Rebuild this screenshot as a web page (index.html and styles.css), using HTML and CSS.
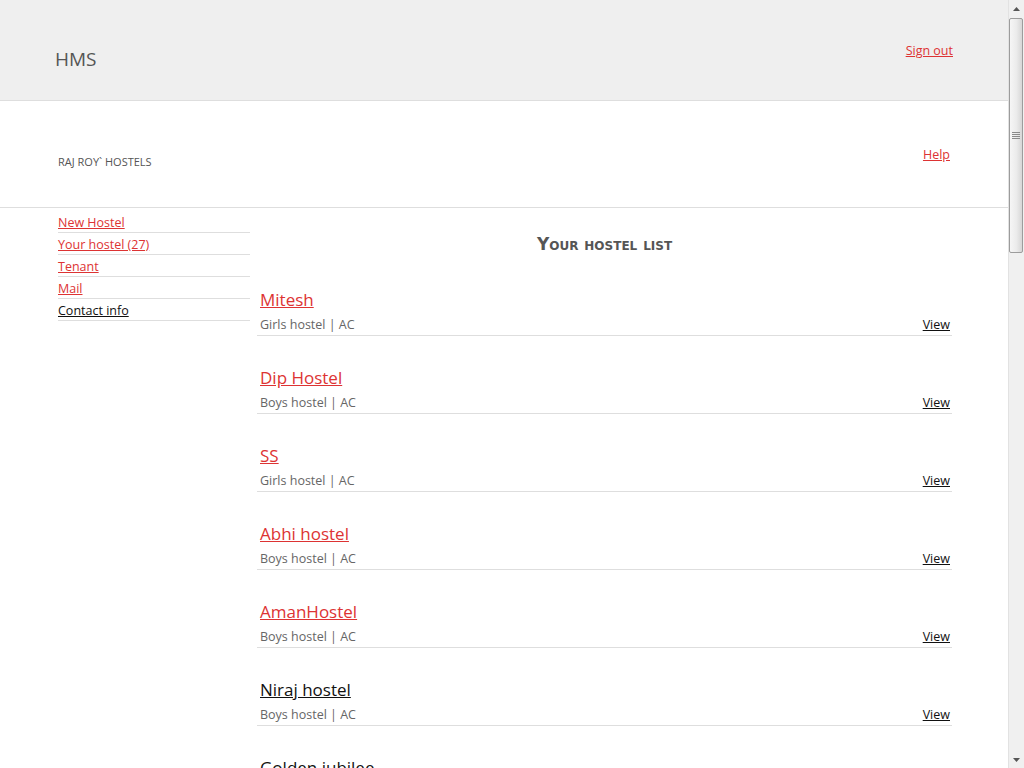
FILE: index.html
```html
<!DOCTYPE html>
<html lang="en">
<head>
<meta charset="utf-8">
<title>HMS</title>
<link rel="stylesheet" href="styles.css">
</head>
<body>
<div class="page">
<header class="topbar">
  <div class="brand">HMS</div>
  <a class="signout" href="#">Sign out</a>
</header>
<div class="subbar">
  <div class="owner">Raj Roy` hostels</div>
  <a class="help" href="#">Help</a>
</div>
<div class="content">
  <nav class="sidebar">
    <a class="side-item" href="#">New Hostel</a>
    <a class="side-item" href="#">Your hostel (27)</a>
    <a class="side-item" href="#">Tenant</a>
    <a class="side-item" href="#">Mail</a>
    <a class="side-item dark" href="#">Contact info</a>
  </nav>
  <main class="main">
    <h1 class="list-title">Your hostel list</h1>
    <div class="entry"><a class="name" href="#">Mitesh</a><div class="meta"><span>Girls hostel | AC</span><a class="view" href="#">View</a></div></div>
    <div class="entry"><a class="name" href="#">Dip Hostel</a><div class="meta"><span>Boys hostel | AC</span><a class="view" href="#">View</a></div></div>
    <div class="entry"><a class="name" href="#">SS</a><div class="meta"><span>Girls hostel | AC</span><a class="view" href="#">View</a></div></div>
    <div class="entry"><a class="name" href="#">Abhi hostel</a><div class="meta"><span>Boys hostel | AC</span><a class="view" href="#">View</a></div></div>
    <div class="entry"><a class="name" href="#">AmanHostel</a><div class="meta"><span>Boys hostel | AC</span><a class="view" href="#">View</a></div></div>
    <div class="entry"><a class="name dark" href="#">Niraj hostel</a><div class="meta"><span>Boys hostel | AC</span><a class="view" href="#">View</a></div></div>
    <div class="entry"><a class="name dark" href="#">Golden jubilee</a><div class="meta"><span>Boys hostel | AC</span><a class="view" href="#">View</a></div></div>
  </main>
</div>
</div>
<div class="scrollbar" aria-hidden="true">
  <div class="sb-btn">
    <svg width="7" height="4" viewBox="0 0 7 4"><path d="M0 4 L3.5 0 L7 4 Z" fill="#555"/></svg>
  </div>
  <div class="sb-track">
    <div class="sb-thumb">
      <svg width="8" height="7" viewBox="0 0 8 7"><path d="M0 0.5H8M0 2.5H8M0 4.5H8M0 6.5H8" stroke="#8a8a8a" stroke-width="1"/></svg>
    </div>
  </div>
  <div class="sb-btn">
    <svg width="7" height="4" viewBox="0 0 7 4"><path d="M0 0 L7 0 L3.5 4 Z" fill="#555"/></svg>
  </div>
</div>
</body>
</html>
```

FILE: styles.css
```css
html, body {
  margin: 0;
  padding: 0;
}
body {
  font-family: "Open Sans", "Noto Sans", "Liberation Sans", sans-serif;
  font-size: 12px;
  color: #555;
  background: #fff;
  display: flex;
  height: 100vh;
  overflow: hidden;
}
a {
  color: #dd3333;
}
a.dark {
  color: #111;
}
.page {
  width: 1008px;
  flex: none;
  overflow: hidden;
}

/* fake window scrollbar */
.scrollbar {
  width: 16px;
  flex: none;
  display: flex;
  flex-direction: column;
  background: #f0f0f0;
  box-sizing: border-box;
  border-left: 1px solid #e2e2e2;
}
.sb-btn {
  height: 17px;
  display: flex;
  align-items: center;
  justify-content: center;
}
.sb-track {
  flex: 1;
  padding-top: 1px;
}
.sb-thumb {
  height: 235px;
  box-sizing: border-box;
  margin: 0 1px 0 0;
  border: 1px solid #9c9c9c;
  border-radius: 2px;
  background: linear-gradient(to right, #f6f6f6, #ebebeb 55%, #d6d6d6);
  display: flex;
  align-items: center;
  justify-content: center;
}

/* top bar */
.topbar {
  height: 101px;
  box-sizing: border-box;
  background: #efefef;
  border-bottom: 1px solid #dedede;
  display: flex;
  justify-content: space-between;
  align-items: flex-start;
  padding: 0 55px;
}
.brand {
  font-size: 19px;
  color: #555;
  margin-top: 46px;
  line-height: 26px;
}
.signout {
  font-size: 12.5px;
  margin-top: 42px;
  line-height: 18px;
}

/* sub bar */
.subbar {
  height: 107px;
  box-sizing: border-box;
  border-bottom: 1px solid #dedede;
  display: flex;
  justify-content: space-between;
  align-items: flex-start;
  padding: 0 58px;
}
.owner {
  text-transform: uppercase;
  font-size: 11px;
  margin-top: 53px;
  line-height: 16px;
  color: #555;
}
.help {
  font-size: 12.5px;
  margin-top: 45px;
  line-height: 18px;
}

/* content */
.content {
  display: flex;
  align-items: flex-start;
  padding-left: 58px;
}
.sidebar {
  width: 192px;
  display: flex;
  flex-direction: column;
  padding-top: 3px;
}
.side-item {
  font-size: 12.5px;
  padding-top: 3px;
  line-height: 18px;
  border-bottom: 1px solid #dedede;
}
.main {
  margin-left: 7px;
  width: 695px;
  padding-top: 24px;
}
.list-title {
  margin: 0 0 2px;
  text-align: center;
  font-family: "DejaVu Sans", sans-serif;
  font-variant: small-caps;
  font-size: 17px;
  line-height: 24px;
  color: #555;
  font-weight: bold;
}
.entry {
  border-bottom: 1px solid #dedede;
  padding: 30px 2px 2px 3px;
  box-sizing: border-box;
  height: 78px;
  display: flex;
  flex-direction: column;
  align-items: flex-start;
}
.name {
  font-size: 17px;
  line-height: 24px;
  margin-bottom: 4px;
}
.meta {
  align-self: stretch;
  display: flex;
  justify-content: space-between;
  line-height: 18px;
  font-size: 12.5px;
  color: #666;
}
.view {
  color: #111;
}
```
